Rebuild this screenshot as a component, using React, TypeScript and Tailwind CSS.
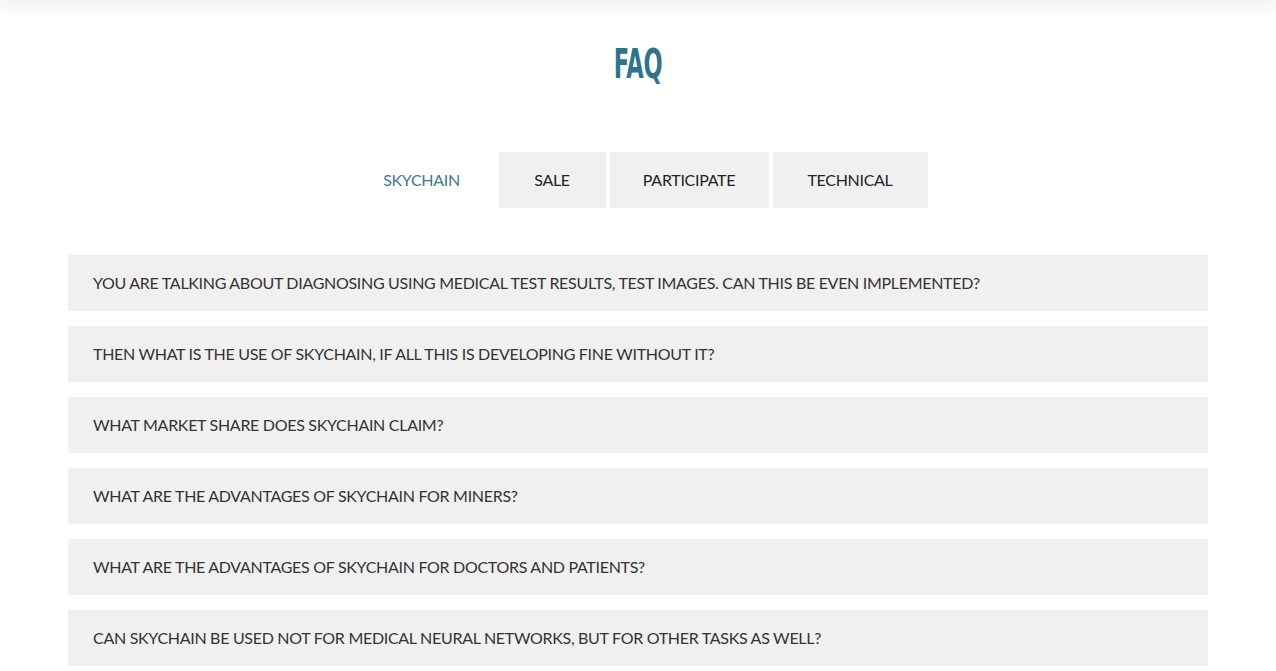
import React from "react";

const tabs = [
  { t: "SKYCHAIN", w: "w-[146px]" },
  { t: "SALE", w: "w-[107px]" },
  { t: "PARTICIPATE", w: "w-[159px]" },
  { t: "TECHNICAL", w: "w-[155px]" },
];
const questions = [
  "YOU ARE TALKING ABOUT DIAGNOSING USING MEDICAL TEST RESULTS, TEST IMAGES. CAN THIS BE EVEN IMPLEMENTED?",
  "THEN WHAT IS THE USE OF SKYCHAIN, IF ALL THIS IS DEVELOPING FINE WITHOUT IT?",
  "WHAT MARKET SHARE DOES SKYCHAIN CLAIM?",
  "WHAT ARE THE ADVANTAGES OF SKYCHAIN FOR MINERS?",
  "WHAT ARE THE ADVANTAGES OF SKYCHAIN FOR DOCTORS AND PATIENTS?",
  "CAN SKYCHAIN BE USED NOT FOR MEDICAL NEURAL NETWORKS, BUT FOR OTHER TASKS AS WELL?",
];

export default function App() {
  return (
    <div className="relative min-h-[671px] bg-white overflow-hidden" style={{ fontFamily: "Lato, 'Open Sans', sans-serif" }}>
      <div className="absolute left-0 right-0 top-0 h-0 shadow-[0_0_18px_4px_rgba(0,0,0,0.12)]" />
      <div className="flex flex-col items-center">
        <h1
          className="mt-[40px] h-[48px] flex items-center justify-center text-[41px] font-bold text-[#2e7390] leading-none scale-x-[0.61]"
          style={{ fontFamily: "'DejaVu Sans Condensed', 'DejaVu Sans', sans-serif" }}
        >
          FAQ
        </h1>
        <div className="mt-[64px] flex gap-[4px]">
          {tabs.map((tab, i) => (
            <button
              key={tab.t}
              className={
                "h-[56px] " + tab.w + " text-[16px] tracking-[-0.3px] leading-none " +
                (i === 0 ? "bg-white text-[#3a7a92]" : "bg-[#f0f0f0] text-[#222]")
              }
            >
              {tab.t}
            </button>
          ))}
        </div>
        <div className="mt-[47px] w-[1140px] flex flex-col gap-[15px]">
          {questions.map((q) => (
            <div key={q} className="h-[56px] bg-[#f0f0f0] flex items-center px-[25px] text-[16px] tracking-[-0.3px] text-[#333]">
              {q}
            </div>
          ))}
        </div>
      </div>
    </div>
  );
}
